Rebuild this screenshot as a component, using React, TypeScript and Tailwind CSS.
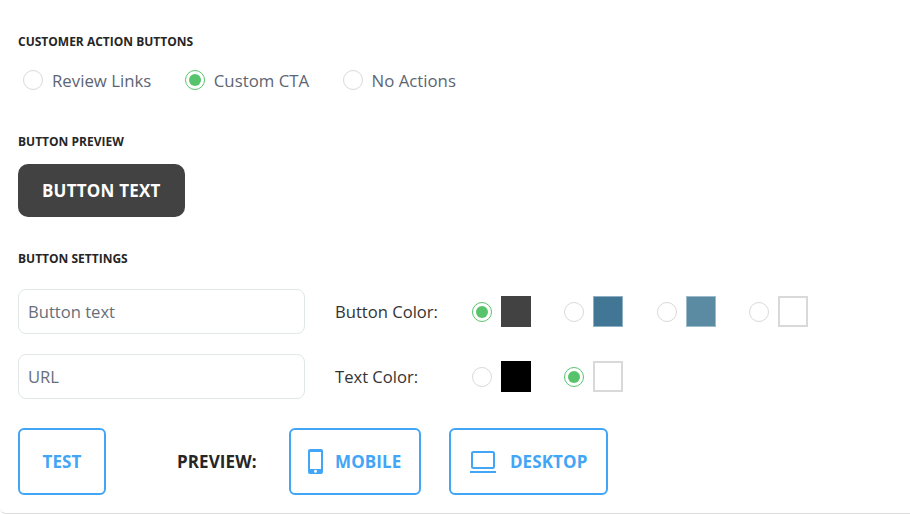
function Heading({ children, className = '' }: { children: string; className?: string }) {
  return <h3 className={`text-xs leading-[18px] font-bold uppercase text-[#262626] ${className}`}>{children}</h3>;
}

function Radio({ checked = false }: { checked?: boolean }) {
  return (
    <span
      className={`flex h-5 w-5 shrink-0 items-center justify-center rounded-full border-[1.5px] bg-white ${
        checked ? 'border-[#5ac46e]' : 'border-[#d9d9d9]'
      }`}
    >
      {checked && <span className="h-3 w-3 rounded-full bg-[#57c46b]" />}
    </span>
  );
}

function Swatch({ checked = false, className }: { checked?: boolean; className: string }) {
  return (
    <div className="flex w-[92.3px] items-center">
      <Radio checked={checked} />
      <span className={`ml-[9px] h-[31px] w-[30px] border ${className}`} />
    </div>
  );
}

function ActionRadio({ label, checked = false }: { label: string; checked?: boolean }) {
  return (
    <label className="flex items-center gap-[9px] text-[16.8px] leading-5 text-[#5c6573]">
      <Radio checked={checked} />
      <span className="translate-y-px">{label}</span>
    </label>
  );
}

function Field({ placeholder }: { placeholder: string }) {
  return (
    <input
      placeholder={placeholder}
      className="h-[45px] w-[287px] rounded-lg border border-[#e1e6e6] bg-white px-[9px] text-[16.6px] text-[#5c6573] outline-none placeholder:text-[#666e7a]"
    />
  );
}

const outline =
  'flex h-[67px] items-center justify-center rounded-md border-2 border-[#42a5f5] text-[17px] font-bold tracking-[0.1px] text-[#42a5f5]';

export default function App() {
  return (
    <div className="h-[514px] w-[910px] overflow-hidden rounded-bl-md border-b border-[#dcdcdc] bg-white pt-[33px] pl-[18px] font-['Open_Sans',sans-serif]">
      <Heading>CUSTOMER ACTION BUTTONS</Heading>
      <div className="mt-[19px] ml-[5px] flex gap-[33.5px]">
        <ActionRadio label="Review Links" />
        <ActionRadio label="Custom CTA" checked />
        <ActionRadio label="No Actions" />
      </div>

      <Heading className="mt-[43px]">BUTTON PREVIEW</Heading>
      <button className="mt-[13px] flex h-[53px] w-[166.5px] items-center justify-center rounded-[10px] bg-[#424242] text-[17px] font-bold tracking-[0.2px] text-white">
        BUTTON TEXT
      </button>

      <Heading className="mt-[33px]">BUTTON SETTINGS</Heading>
      <div className="mt-[21px] flex flex-col gap-5">
        <div className="flex items-center">
          <Field placeholder="Button text" />
          <span className="ml-[30px] w-[137px] pt-px text-[16.6px] text-[#333]">Button Color:</span>
          <div className="flex">
            <Swatch checked className="border-[#424242] bg-[#424242]" />
            <Swatch className="border-[#8fb0c2] bg-[#417694]" />
            <Swatch className="border-[#9dbccb] bg-[#5b8ba3]" />
            <Swatch className="border-2 border-[#d9d9d9] bg-white" />
          </div>
        </div>
        <div className="flex items-center">
          <Field placeholder="URL" />
          <span className="ml-[30px] w-[137px] pt-px text-[16.6px] text-[#333]">Text Color:</span>
          <div className="flex">
            <Swatch className="border-black bg-black" />
            <Swatch checked className="border-2 border-[#d9d9d9] bg-white" />
          </div>
        </div>
      </div>

      <div className="mt-[29px] flex items-center">
        <button className={`${outline} w-[88px]`}>TEST</button>
        <span className="ml-[71px] text-[17px] font-bold tracking-[0.1px] text-[#262626]">PREVIEW:</span>
        <button className={`${outline} ml-[32px] w-[132px] gap-3`}>
          <svg width="15" height="25" viewBox="0 0 15 25" className="shrink-0">
            <path
              fill="#42a5f5"
              fillRule="evenodd"
              d="M2 0h11a2 2 0 0 1 2 2v21a2 2 0 0 1-2 2H2a2 2 0 0 1-2-2V2a2 2 0 0 1 2-2zM2 3v17h11V3zM7.5 20.8a1.5 1.5 0 1 0 0 3 1.5 1.5 0 0 0 0-3z"
            />
          </svg>
          MOBILE
        </button>
        <button className={`${outline} ml-[28px] w-[159px] gap-[14px] pl-px`}>
          <svg width="26" height="22" viewBox="0 0 26 22" className="shrink-0">
            <rect x="2" y="1" width="22" height="16" rx="1.5" fill="none" stroke="#42a5f5" strokeWidth="2" />
            <rect x="0" y="20" width="26" height="2" fill="#42a5f5" />
          </svg>
          DESKTOP
        </button>
      </div>
    </div>
  );
}
